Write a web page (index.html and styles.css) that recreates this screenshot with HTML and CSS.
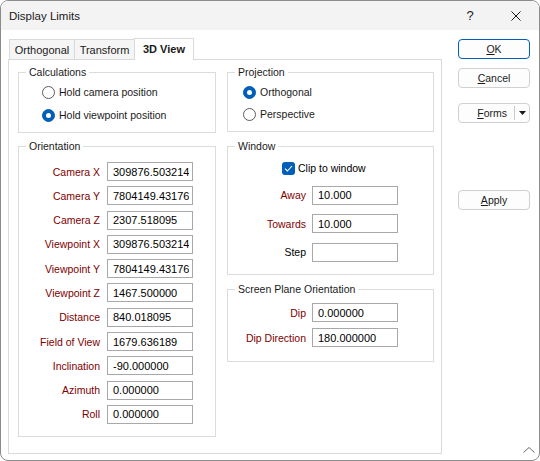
FILE: index.html
```html
<!DOCTYPE html>
<html lang="en">
<head>
  <meta charset="UTF-8">
  <title>Display Limits</title>
  <link rel="stylesheet" href="styles.css">
</head>
<body>
  <div class="window">
    <div class="titlebar">
      <span class="title">Display Limits</span>
      <span class="help">?</span>
      <span class="close">
        <svg width="10" height="10" viewBox="0 0 10 10"><path d="M0.5 0.5 L9.5 9.5 M9.5 0.5 L0.5 9.5" stroke="#1a1a1a" stroke-width="1" fill="none"/></svg>
      </span>
    </div>

    <div class="client">
      <div class="tabctl">
        <div class="tabs">
          <div class="tab tab-ortho">Orthogonal</div>
          <div class="tab tab-transform">Transform</div>
          <div class="tab tab-3d active">3D View</div>
        </div>

        <div class="panel">
          <div class="col col-left">
            <div class="group calc">
              <span class="legend">Calculations</span>
              <div class="radio"><span class="dot"></span>Hold camera position</div>
              <div class="radio on"><span class="dot"></span>Hold viewpoint position</div>
            </div>

            <div class="group orient">
              <span class="legend">Orientation</span>
              <div class="row"><label>Camera X</label><input class="field" type="text" value="309876.503214"></div>
              <div class="row"><label>Camera Y</label><input class="field" type="text" value="7804149.431767"></div>
              <div class="row"><label>Camera Z</label><input class="field" type="text" value="2307.518095"></div>
              <div class="row"><label>Viewpoint X</label><input class="field" type="text" value="309876.503214"></div>
              <div class="row"><label>Viewpoint Y</label><input class="field" type="text" value="7804149.431767"></div>
              <div class="row"><label>Viewpoint Z</label><input class="field" type="text" value="1467.500000"></div>
              <div class="row"><label>Distance</label><input class="field" type="text" value="840.018095"></div>
              <div class="row"><label>Field of View</label><input class="field" type="text" value="1679.636189"></div>
              <div class="row"><label>Inclination</label><input class="field" type="text" value="-90.000000"></div>
              <div class="row"><label>Azimuth</label><input class="field" type="text" value="0.000000"></div>
              <div class="row"><label>Roll</label><input class="field" type="text" value="0.000000"></div>
            </div>
          </div>

          <div class="col col-right">
            <div class="group proj">
              <span class="legend">Projection</span>
              <div class="radio on"><span class="dot"></span>Orthogonal</div>
              <div class="radio"><span class="dot"></span>Perspective</div>
            </div>

            <div class="group win">
              <span class="legend">Window</span>
              <div class="check">
                <span class="box">
                  <svg width="9" height="7" viewBox="0 0 9 7"><path d="M1 3.6 L3.4 6 L8 1" stroke="#fff" stroke-width="1.1" fill="none"/></svg>
                </span>
                Clip to window
              </div>
              <div class="row"><label>Away</label><input class="field" type="text" value="10.000"></div>
              <div class="row"><label>Towards</label><input class="field" type="text" value="10.000"></div>
              <div class="row"><label class="plain">Step</label><input class="field" type="text" value=""></div>
            </div>

            <div class="group screen">
              <span class="legend">Screen Plane Orientation</span>
              <div class="row"><label>Dip</label><input class="field" type="text" value="0.000000"></div>
              <div class="row"><label>Dip Direction</label><input class="field" type="text" value="180.000000"></div>
            </div>
          </div>
        </div>
      </div>

      <div class="buttons">
        <button class="btn default"><u>O</u>K</button>
        <button class="btn cancel"><u>C</u>ancel</button>
        <button class="btn forms">
          <span class="forms-text"><u>F</u>orms</span>
          <span class="split">
            <svg width="7" height="4" viewBox="0 0 7 4"><path d="M0 0 L7 0 L3.5 4 Z" fill="#1a1a1a"/></svg>
          </span>
        </button>
        <button class="btn apply"><u>A</u>pply</button>
      </div>
    </div>

    <svg class="grip" width="12" height="6" viewBox="0 0 12 6"><polyline points="0.5,5.5 6,0.5 11.5,5.5" stroke="#6a6a6a" stroke-width="1" fill="none"/></svg>
  </div>
</body>
</html>
```

FILE: styles.css
```css
body {
  margin: 0;
  font-family: "Liberation Sans", Arial, sans-serif;
  font-size: 10.5px;
  color: #1a1a1a;
  background: #fff;
}

.window {
  width: 540px;
  height: 461px;
  box-sizing: border-box;
  border: 1px solid #8c8c8c;
  border-radius: 8px;
  background: #fff;
  overflow: hidden;
  position: relative;
  display: flex;
  flex-direction: column;
}

/* title bar */
.titlebar {
  height: 29px;
  flex: none;
  background: #f3f3f3;
  display: flex;
  align-items: center;
  padding-left: 8px;
}

.title {
  flex: 1;
  font-size: 11.5px;
}

.help,
.close {
  width: 46px;
  height: 29px;
  display: flex;
  align-items: center;
  justify-content: center;
}

.help {
  font-size: 13px;
}

/* client area */
.client {
  flex: 1;
  display: flex;
  padding: 8px 0 0 7px;
}

.tabctl {
  width: 434px;
  display: flex;
  flex-direction: column;
}

.tabs {
  display: flex;
  align-items: flex-end;
  height: 21px;
  padding-left: 1px;
  position: relative;
  z-index: 1;
}

.tab {
  height: 20px;
  box-sizing: border-box;
  border: 1px solid #d9d9d9;
  border-bottom: none;
  background: #f5f5f5;
  display: flex;
  align-items: center;
  justify-content: center;
  font-size: 11px;
}

.tab-ortho {
  width: 66px;
}

.tab-transform {
  width: 61px;
  margin-left: -1px;
}

.tab-3d {
  width: 60px;
  margin-left: -1px;
}

.tab.active {
  height: 22px;
  margin-bottom: -1px;
  background: #fff;
  font-weight: bold;
  padding-bottom: 1px;
}

.panel {
  height: 395px;
  box-sizing: border-box;
  border: 1px solid #d9d9d9;
  background: #fff;
  display: flex;
  gap: 11px;
  padding: 12px 0 0 9px;
}

.col {
  display: flex;
  flex-direction: column;
}

.col-left {
  width: 198px;
  gap: 13px;
}

.col-right {
  width: 207px;
  gap: 14px;
}

/* group boxes */
.group {
  position: relative;
  box-sizing: border-box;
  border: 1px solid #dcdcdc;
  display: flex;
  flex-direction: column;
}

.legend {
  position: absolute;
  top: -8px;
  left: 7px;
  padding: 0 3px;
  background: #fff;
  line-height: 14px;
  white-space: nowrap;
}

.calc {
  height: 61px;
  padding: 11px 0 0 23px;
  gap: 7px;
}

.proj {
  height: 60px;
  padding: 11px 0 0 15px;
  gap: 6px;
}

.orient {
  height: 291px;
  padding-top: 15px;
  gap: 5.3px;
}

.win {
  height: 129px;
  padding-top: 13px;
  gap: 9.5px;
}

.screen {
  height: 73px;
  padding-top: 13px;
  gap: 6px;
}

/* radios and checkbox */
.radio {
  display: flex;
  align-items: center;
  height: 16px;
}

.radio .dot {
  width: 13px;
  height: 13px;
  box-sizing: border-box;
  border: 1px solid #5b5b5b;
  border-radius: 50%;
  margin-right: 4px;
  background: #fff;
  position: relative;
}

.radio.on .dot {
  background: #005fb8;
  border-color: #005fb8;
}

.radio.on .dot::after {
  content: "";
  position: absolute;
  left: 3px;
  top: 3px;
  width: 5px;
  height: 5px;
  border-radius: 50%;
  background: #fff;
}

.check {
  display: flex;
  align-items: center;
  height: 16px;
  padding-left: 54px;
  color: #000;
}

.check .box {
  width: 13px;
  height: 13px;
  box-sizing: border-box;
  border-radius: 3px;
  background: #005fb8;
  margin-right: 3px;
  display: flex;
  align-items: center;
  justify-content: center;
}

/* label + edit rows */
.row {
  display: flex;
  align-items: center;
  height: 19px;
  gap: 7px;
}

.row label {
  width: 81px;
  text-align: right;
  color: #800000;
  white-space: nowrap;
}

.win .row,
.screen .row {
  gap: 6px;
}

.win .row label,
.screen .row label {
  width: 78px;
}

.row label.plain {
  color: #000;
}

.field {
  width: 86px;
  height: 19px;
  box-sizing: border-box;
  border: 1px solid #a8a8a8;
  border-radius: 0;
  margin: 0;
  padding: 0 3px 0 5px;
  font-family: "Liberation Sans", Arial, sans-serif;
  font-size: 11px;
  color: #000;
  background: #fff;
  outline: none;
}

/* dialog buttons */
.buttons {
  width: 72px;
  margin-left: 16px;
  padding-top: 1px;
  display: flex;
  flex-direction: column;
}

.btn {
  height: 20px;
  box-sizing: border-box;
  border: 1px solid #d0d0d0;
  border-radius: 4px;
  background: #fdfdfd;
  display: flex;
  align-items: center;
  justify-content: center;
  padding: 0;
  font-family: inherit;
  font-size: 10.5px;
  color: #1a1a1a;
}

.btn.default {
  border-color: #005fb8;
}

.btn.cancel {
  margin-top: 9px;
}

.btn.forms {
  margin-top: 15px;
  justify-content: flex-end;
}

.forms-text {
  padding-right: 7px;
}

.split {
  width: 15px;
  height: 14px;
  box-sizing: border-box;
  border-left: 1px solid #c8c8c8;
  display: flex;
  align-items: center;
  justify-content: center;
}

.btn.apply {
  margin-top: 67px;
}

.grip {
  position: absolute;
  right: 4px;
  bottom: 7px;
}
```
